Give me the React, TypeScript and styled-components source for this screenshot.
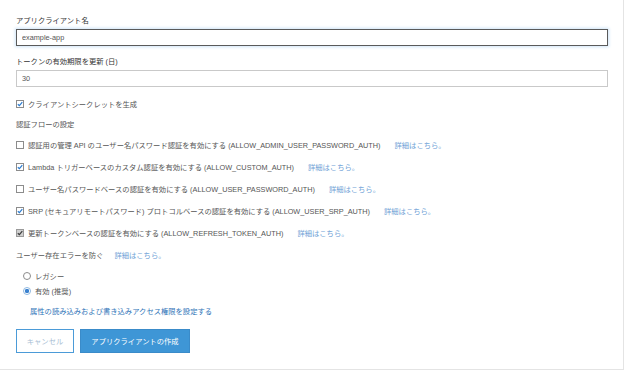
import React from 'react';
import styled, { createGlobalStyle } from 'styled-components';

const GlobalStyle = createGlobalStyle`
    body {
        margin: 0;
        background: #fff;
        font-family: "Liberation Sans", "Noto Sans CJK JP", sans-serif;
    }
`;

const Panel = styled.div`
    width: 624px;
    height: 370px;
    box-sizing: border-box;
    border-right: 1px solid #e4e4e4;
    border-bottom: 1px solid #e4e4e4;
    padding: 15px 15px 0 16px;
    font-size: 7.3px;
    color: #444;
`;

const Label = styled.div<{ $top?: number }>`
    line-height: 12px;
    color: #333;
    margin-top: ${p => p.$top ?? 0}px;
    margin-bottom: 2px;
`;

const TextInput = styled.input<{ $focused?: boolean }>`
    display: block;
    width: 100%;
    height: 17px;
    box-sizing: border-box;
    padding: 0 5px;
    font: inherit;
    font-size: 7.3px;
    color: #555;
    background: #fff;
    border: 1px solid ${p => (p.$focused ? '#5a5a5a' : '#c9c9c9')};
    box-shadow: ${p => (p.$focused ? '0 0 3px 1px #cfe4f7' : 'none')};
    outline: none;
`;

const Line = styled.div<{ $top?: number }>`
    display: flex;
    align-items: center;
    height: 12px;
    margin-top: ${p => p.$top ?? 0}px;
    color: #555;
    white-space: nowrap;
`;

const Heading = styled.div<{ $top?: number }>`
    line-height: 12px;
    margin-top: ${p => p.$top ?? 0}px;
    color: #555;
`;

const FlowList = styled.div`
    display: flex;
    flex-direction: column;
    gap: 10px;
    margin-top: 8px;
`;

const Box = styled.span<{ $checked?: boolean; $disabled?: boolean }>`
    display: inline-flex;
    align-items: center;
    justify-content: center;
    width: 8px;
    height: 8px;
    box-sizing: border-box;
    margin-right: 4px;
    border: 1px solid ${p => (p.$disabled ? '#9a9a9a' : '#8c8c8c')};
    background: ${p => (p.$disabled ? '#cfcfcf' : '#fff')};
    flex-shrink: 0;
`;

const DetailLink = styled.a<{ $gap?: number }>`
    color: #6f9fd6;
    text-decoration: none;
    margin-left: ${p => p.$gap ?? 14}px;
`;

const RadioGroup = styled.div`
    display: flex;
    flex-direction: column;
    gap: 3px;
    margin-top: 9px;
    padding-left: 7px;
`;

const RadioCircle = styled.span<{ $checked?: boolean }>`
    display: inline-block;
    width: 8px;
    height: 8px;
    box-sizing: border-box;
    border-radius: 50%;
    margin-right: 4px;
    border: 1px solid ${p => (p.$checked ? '#8fb8e0' : '#8c8c8c')};
    background: ${p => (p.$checked ? 'radial-gradient(circle, #3b82cf 0 2px, #fff 2.3px)' : '#fff')};
`;

const PermissionLink = styled.a`
    display: block;
    line-height: 12px;
    margin-top: 9px;
    margin-left: 14px;
    color: #2f74b8;
    text-decoration: none;
`;

const Actions = styled.div`
    display: flex;
    gap: 6px;
    margin-top: 11px;
`;

const Button = styled.button<{ $primary?: boolean }>`
    height: 24px;
    box-sizing: border-box;
    padding: 0;
    font: inherit;
    font-size: 7.3px;
    width: ${p => (p.$primary ? 110 : 58)}px;
    color: ${p => (p.$primary ? '#fff' : '#a7bdd3')};
    background: ${p => (p.$primary ? '#3e96d6' : '#fff')};
    border: 1px solid ${p => (p.$primary ? '#3a8bc9' : '#4b9bd8')};
`;

const Check = ({ checked, disabled }: { checked?: boolean; disabled?: boolean }) => (
    <Box $checked={checked} $disabled={disabled}>
        {checked && (
            <svg width="6" height="6" viewBox="0 0 6 6">
                <polyline points="0.8,3.2 2.4,4.7 5.3,1.2" fill="none"
                    stroke={disabled ? '#3c3c3c' : '#2c7dd1'} strokeWidth="1.2" />
            </svg>
        )}
    </Box>
);

const flows = [
    { text: '認証用の管理 API のユーザー名パスワード認証を有効にする (ALLOW_ADMIN_USER_PASSWORD_AUTH)', checked: false },
    { text: 'Lambda トリガーベースのカスタム認証を有効にする (ALLOW_CUSTOM_AUTH)', checked: true },
    { text: 'ユーザー名パスワードベースの認証を有効にする (ALLOW_USER_PASSWORD_AUTH)', checked: false },
    { text: 'SRP (セキュアリモートパスワード) プロトコルベースの認証を有効にする (ALLOW_USER_SRP_AUTH)', checked: true },
    { text: '更新トークンベースの認証を有効にする (ALLOW_REFRESH_TOKEN_AUTH)', checked: true, disabled: true },
];

const App = () => (
    <>
        <GlobalStyle />
        <Panel>
            <Label>アプリクライアント名</Label>
            <TextInput $focused defaultValue="example-app" />
            <Label $top={10}>トークンの有効期限を更新 (日)</Label>
            <TextInput defaultValue="30" />
            <Line $top={11}>
                <Check checked />
                クライアントシークレットを生成
            </Line>
            <Heading $top={9}>認証フローの設定</Heading>
            <FlowList>
                {flows.map(f => (
                    <Line key={f.text}>
                        <Check checked={f.checked} disabled={f.disabled} />
                        {f.text}
                        <DetailLink href="#">詳細はこちら。</DetailLink>
                    </Line>
                ))}
            </FlowList>
            <Line $top={10}>
                ユーザー存在エラーを防ぐ
                <DetailLink href="#" $gap={11}>詳細はこちら。</DetailLink>
            </Line>
            <RadioGroup>
                <Line>
                    <RadioCircle />
                    レガシー
                </Line>
                <Line>
                    <RadioCircle $checked />
                    有効 (推奨)
                </Line>
            </RadioGroup>
            <PermissionLink href="#">属性の読み込みおよび書き込みアクセス権限を設定する</PermissionLink>
            <Actions>
                <Button>キャンセル</Button>
                <Button $primary>アプリクライアントの作成</Button>
            </Actions>
        </Panel>
    </>
);

export default App;
